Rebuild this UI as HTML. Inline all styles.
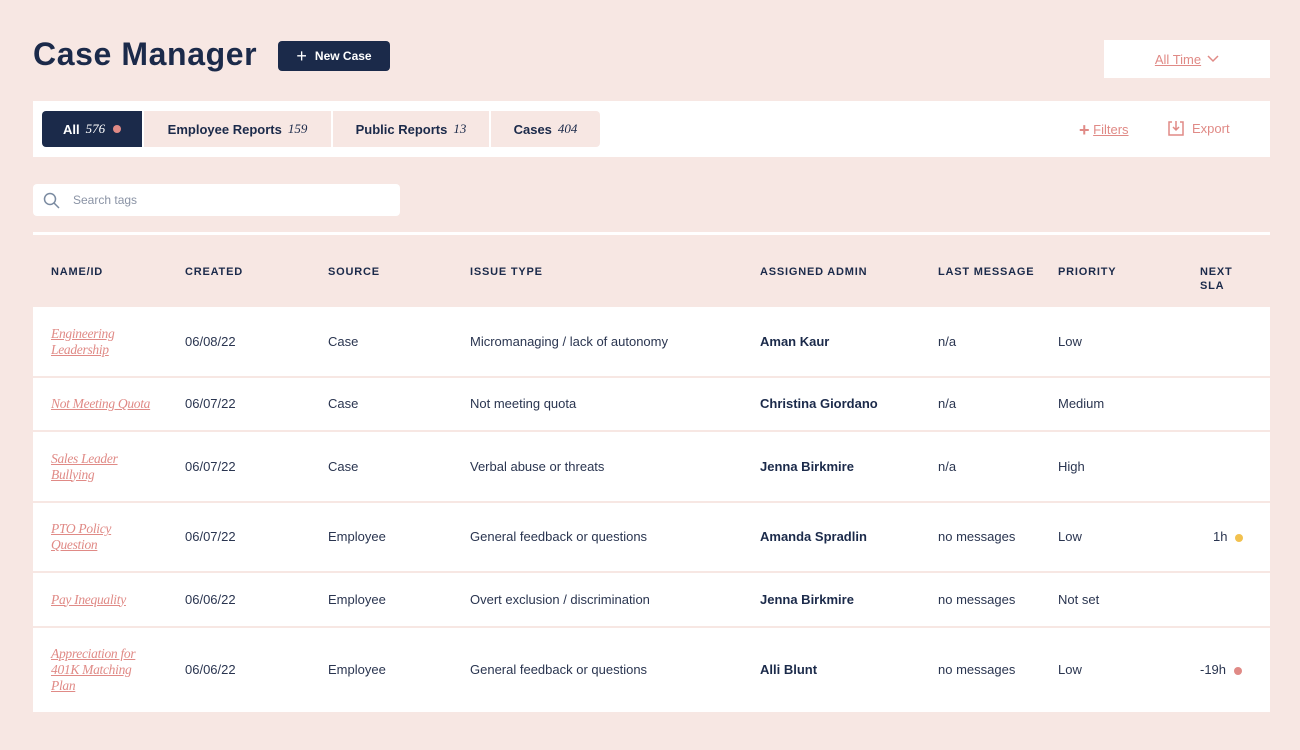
<!DOCTYPE html>
<html><head><style>
*{box-sizing:border-box;margin:0;padding:0}
body{width:1300px;height:750px;background:#f7e7e3;font-family:"Liberation Sans",sans-serif;color:#1b2a4a;position:relative;overflow:hidden}
.abs{position:absolute}
h1{position:absolute;left:33px;top:36px;font-size:32px;font-weight:bold;letter-spacing:0.6px;color:#1b2a4a}
.nb{left:278px;top:41px;width:112px;height:30px;background:#1b2a4a;border-radius:4px;color:#fff;font-size:12px;font-weight:bold;display:flex;align-items:center;justify-content:center;gap:8px}
.time{left:1104px;top:40px;width:166px;height:38px;background:#fff;color:#e08a86;font-size:13px;display:flex;align-items:center;justify-content:center;gap:6px}
.time u{text-decoration:underline}
.bar{left:33px;top:101px;width:1237px;height:56px;background:#fff}
.tab{position:absolute;top:10px;height:36px;background:#f7e7e3;font-size:13px;font-weight:bold;display:flex;align-items:center;justify-content:center;gap:6px}
.tab i{font-family:"Liberation Serif",serif;font-weight:normal;font-size:13px}
.search{left:33px;top:184px;width:367px;height:32px;background:#fff;border-radius:4px;font-size:12px;color:#8a93a5;display:flex;align-items:center;padding-left:40px}
.tbl{left:33px;top:232px;width:1237px;height:484px}
.th{position:absolute;top:33px;font-size:11px;font-weight:bold;letter-spacing:0.8px;color:#1b2a4a;line-height:14px}
.row{position:absolute;left:0;width:1237px;background:#fff;border-bottom:2px solid #f7e7e3}
.c{position:absolute;top:50%;transform:translateY(-50%);font-size:13px;color:#2a3550;line-height:16px}
.n{font-family:"Liberation Serif",serif;font-style:italic;color:#e08a86;text-decoration:underline;font-size:13.5px;letter-spacing:-0.3px;width:120px}
.b{font-weight:bold;color:#1b2a4a}
.dot{display:inline-block;width:8px;height:8px;border-radius:50%;margin-left:8px;vertical-align:middle}
</style></head><body>
<h1>Case Manager</h1>
<div class="abs nb"><span style="font-size:18px;font-weight:normal">+</span>New Case</div>
<div class="abs time"><u>All Time</u><svg width="12" height="8" viewBox="0 0 12 8"><path d="M1 1l5 5 5-5" stroke="#e08a86" stroke-width="1.5" fill="none"/></svg></div>
<div class="abs bar">
<div class="tab" style="left:9px;width:100px;background:#1b2a4a;color:#fff;border-radius:4px 0 0 4px">All <i>576</i><span class="dot" style="background:#e08a86;margin-left:2px"></span></div>
<div class="tab" style="left:111px;width:187px">Employee Reports <i>159</i></div>
<div class="tab" style="left:300px;width:156px">Public Reports <i>13</i></div>
<div class="tab" style="left:458px;width:109px;border-radius:0 4px 4px 0">Cases <i>404</i></div>
<div class="abs" style="left:1046px;top:19px;font-size:13px;color:#e08a86"><span style="font-size:18px;font-weight:bold;vertical-align:-2px">+</span> <u>Filters</u></div>
<div class="abs" style="left:1135px;top:19px;font-size:13px;color:#e08a86;display:flex;gap:8px;align-items:center"><svg width="16" height="16" viewBox="0 0 16 16" fill="none" stroke="#e08a86" stroke-width="1.5"><path d="M4 2H1v13h14V2h-3M8 1v9M5 7l3 3 3-3"/></svg>Export</div>
</div>
<div class="abs search"><svg class="abs" style="left:10px;top:8px" width="17" height="17" viewBox="0 0 17 17" fill="none" stroke="#7a8aa0" stroke-width="1.5"><circle cx="7" cy="7" r="5.5"/><path d="M11 11l5 5"/></svg>Search tags</div>
<div class="abs tbl">
<div class="abs" style="left:0;top:0;width:1237px;height:3px;background:#fff"></div>
<div class="th" style="left:18px">NAME/ID</div>
<div class="th" style="left:152px">CREATED</div>
<div class="th" style="left:295px">SOURCE</div>
<div class="th" style="left:437px">ISSUE TYPE</div>
<div class="th" style="left:727px">ASSIGNED ADMIN</div>
<div class="th" style="left:905px">LAST MESSAGE</div>
<div class="th" style="left:1025px">PRIORITY</div>
<div class="th" style="left:1167px">NEXT<br>SLA</div>

<div class="row" style="top:75px;height:71px">
<div class="c n" style="left:18px;width:90px">Engineering Leadership</div><div class="c" style="left:152px">06/08/22</div><div class="c" style="left:295px">Case</div><div class="c" style="left:437px">Micromanaging / lack of autonomy</div><div class="c b" style="left:727px">Aman Kaur</div><div class="c" style="left:905px">n/a</div><div class="c" style="left:1025px">Low</div></div>
<div class="row" style="top:146px;height:54px">
<div class="c n" style="left:18px;width:130px">Not Meeting Quota</div><div class="c" style="left:152px">06/07/22</div><div class="c" style="left:295px">Case</div><div class="c" style="left:437px">Not meeting quota</div><div class="c b" style="left:727px">Christina Giordano</div><div class="c" style="left:905px">n/a</div><div class="c" style="left:1025px">Medium</div></div>
<div class="row" style="top:200px;height:71px">
<div class="c n" style="left:18px;width:90px">Sales Leader Bullying</div><div class="c" style="left:152px">06/07/22</div><div class="c" style="left:295px">Case</div><div class="c" style="left:437px">Verbal abuse or threats</div><div class="c b" style="left:727px">Jenna Birkmire</div><div class="c" style="left:905px">n/a</div><div class="c" style="left:1025px">High</div></div>
<div class="row" style="top:271px;height:70px">
<div class="c n" style="left:18px;width:80px">PTO Policy Question</div><div class="c" style="left:152px">06/07/22</div><div class="c" style="left:295px">Employee</div><div class="c" style="left:437px">General feedback or questions</div><div class="c b" style="left:727px">Amanda Spradlin</div><div class="c" style="left:905px">no messages</div><div class="c" style="left:1025px">Low</div><div class="c" style="left:1180px">1h<span class="dot" style="background:#f2c14e"></span></div></div>
<div class="row" style="top:341px;height:55px">
<div class="c n" style="left:18px">Pay Inequality</div><div class="c" style="left:152px">06/06/22</div><div class="c" style="left:295px">Employee</div><div class="c" style="left:437px">Overt exclusion / discrimination</div><div class="c b" style="left:727px">Jenna Birkmire</div><div class="c" style="left:905px">no messages</div><div class="c" style="left:1025px">Not set</div></div>
<div class="row" style="top:396px;height:86px">
<div class="c n" style="left:18px;width:105px">Appreciation for 401K Matching Plan</div><div class="c" style="left:152px">06/06/22</div><div class="c" style="left:295px">Employee</div><div class="c" style="left:437px">General feedback or questions</div><div class="c b" style="left:727px">Alli Blunt</div><div class="c" style="left:905px">no messages</div><div class="c" style="left:1025px">Low</div><div class="c" style="left:1167px">-19h<span class="dot" style="background:#e08a86"></span></div></div>
</div>
</body></html>
